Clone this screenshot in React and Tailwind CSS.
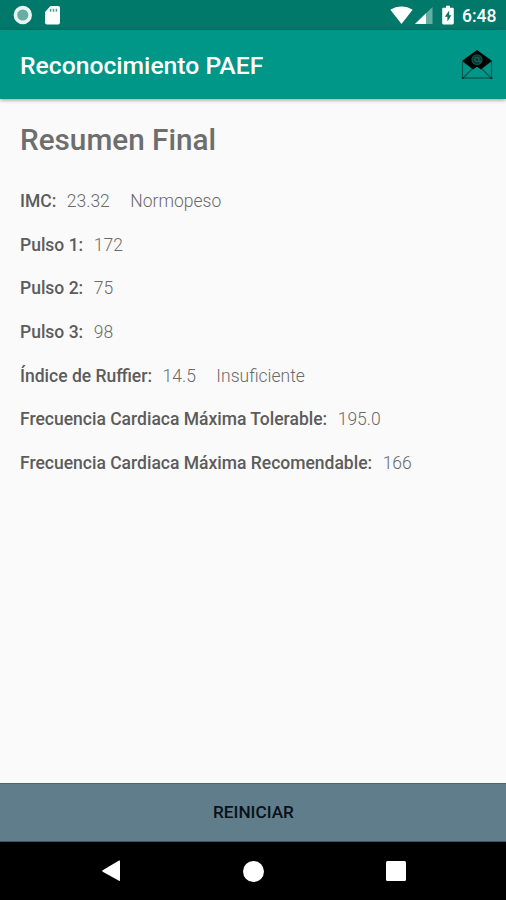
import React from "react";

const rows = [
  { label: "IMC:", value: "23.32", note: "Normopeso" },
  { label: "Pulso 1:", value: "172" },
  { label: "Pulso 2:", value: "75" },
  { label: "Pulso 3:", value: "98" },
  { label: "Índice de Ruffier:", value: "14.5", note: "Insuficiente" },
  { label: "Frecuencia Cardiaca Máxima Tolerable:", value: "195.0" },
  { label: "Frecuencia Cardiaca Máxima Recomendable:", value: "166" },
];

function StatusBar() {
  return (
    <div className="flex h-[30px] shrink-0 items-center bg-[#00796b] pl-[13px] pr-[9px] text-white">
      <svg className="h-5 w-5" viewBox="0 0 20 20">
        <circle cx="9.8" cy="10" r="7.4" fill="#66ada4" stroke="#eaf5f3" strokeWidth="3.6" />
      </svg>
      <svg className="ml-[11px] h-5 w-[17px]" viewBox="0 0 17 20">
        <path d="M6.5 1H14a2 2 0 0 1 2 2v14.5a2 2 0 0 1-2 2H3a2 2 0 0 1-2-2V7z" fill="#fff" />
        <path d="M6.6 3.7v3M9.5 3.7v3M12.4 3.7v3" stroke="#4c9e94" strokeWidth="1.5" />
      </svg>
      <svg className="ml-auto h-[20px] w-[23px]" viewBox="0 0 23 20">
        <path d="M11.5 19 .4 4.8C6.6.3 16.4.3 22.6 4.8z" fill="#fff" />
      </svg>
      <svg className="ml-[2px] h-[20px] w-[18px]" viewBox="0 0 18 20">
        <path d="M0 19 17.5 2v17z" fill="#66ada4" />
        <path d="M0 19 11 8.2V19z" fill="#fff" />
      </svg>
      <svg className="ml-[9px] h-[20px] w-[12px]" viewBox="0 0 12 20">
        <path d="M4 .8h4v2h2.5c.8 0 1.3.5 1.3 1.3v14c0 .8-.5 1.3-1.3 1.3h-9c-.8 0-1.3-.5-1.3-1.3v-14c0-.8.5-1.3 1.3-1.3H4z" fill="#fff" />
        <path d="M7.2 5.5 2.8 11.8h2.6v4.8l4-6.4H7.2z" fill="#00796b" />
      </svg>
      <span className="ml-[8px] mt-[3px] w-[35px] whitespace-nowrap text-[17.5px] font-medium leading-none">6:48</span>
    </div>
  );
}

function MailIcon() {
  return (
    <svg className="mt-[1px] h-[32px] w-[32px]" viewBox="0 0 32 32" fill="none">
      <path d="M1.5 11.7v17M30.5 11.7v17" stroke="#075d53" strokeWidth="1.2" />
      <path d="M1.5 29h29" stroke="#056358" strokeWidth="1.6" />
      <path d="M1.5 12 11.5 19.5 2 29M30.5 12 20.5 19.5 30 29" stroke="#04594f" strokeWidth="1.3" />
      <path d="M16 1 30.8 11.7 20.5 19.7 16 17.8l-4.5 1.9L1.2 11.7z" fill="#000" />
      <path d="m11.5 19.7 4.5-3.5 4.5 3.5" stroke="#000" strokeWidth="1.8" />
      <circle cx="16" cy="10.7" r="5" fill="#0a3a34" stroke="#12564e" strokeWidth="1.1" />
      <path d="M18.1 8.4v3.3c0 1.8 2 1.5 2-.2M18.1 10.6a2.2 2.2 0 1 1-4.4 0 2.2 2.2 0 0 1 4.4 0z" stroke="#17645a" strokeWidth="1.1" />
      <path d="M.7 28.2h2v1.8h-2zM29.3 28.2h2v1.8h-2z" fill="#022c27" />
    </svg>
  );
}

export default function App() {
  return (
    <div className="flex h-[900px] w-[506px] flex-col overflow-hidden bg-[#fafafa] font-[Roboto,sans-serif]">
      <StatusBar />
      <header className="flex h-[68.6px] shrink-0 items-center justify-between bg-[#009688] pl-5 pr-[13px] shadow-[0_1px_4px_rgba(0,0,0,0.4)]">
        <h1 className="mt-[4px] whitespace-nowrap text-[24.7px] font-medium leading-none text-white">Reconocimiento PAEF</h1>
        <MailIcon />
      </header>
      <main className="flex-1 pl-5">
        <h2 className="mt-[26.4px] whitespace-nowrap text-[29.7px] font-medium leading-[30px] text-[#6e6e6e]">Resumen Final</h2>
        <div className="mt-[24.5px] text-[17.5px] text-[#6a6a6a]">
          {rows.map((row) => (
            <div key={row.label} className="flex h-[43.6px] items-center whitespace-nowrap">
              <span className="font-medium text-[#5c5c5c]">{row.label}</span>
              <span className="ml-[10.5px] font-light">{row.value}</span>
              {row.note && <span className="ml-[20.5px] font-light">{row.note}</span>}
            </div>
          ))}
        </div>
      </main>
      <button className="h-[59px] shrink-0 border-y border-t-[#4c6471] border-b-[#415561] bg-[#607d8b] pl-[1px] text-[17.2px] font-medium text-[#091218]">REINICIAR</button>
      <nav className="flex h-[58px] shrink-0 items-center bg-black pl-[102px]">
        <svg className="h-[22px] w-[18px]" viewBox="0 0 18 22">
          <path d="M.7 10.3 17 .6q1-.5 1 .6v19q0 1.1-1 .5L.7 11.7q-1-.7 0-1.4z" fill="#fff" />
        </svg>
        <span className="ml-[123px] h-[21px] w-[21px] rounded-full bg-white" />
        <span className="ml-[122px] h-[20px] w-[20px] rounded-[1.5px] bg-white" />
      </nav>
    </div>
  );
}
